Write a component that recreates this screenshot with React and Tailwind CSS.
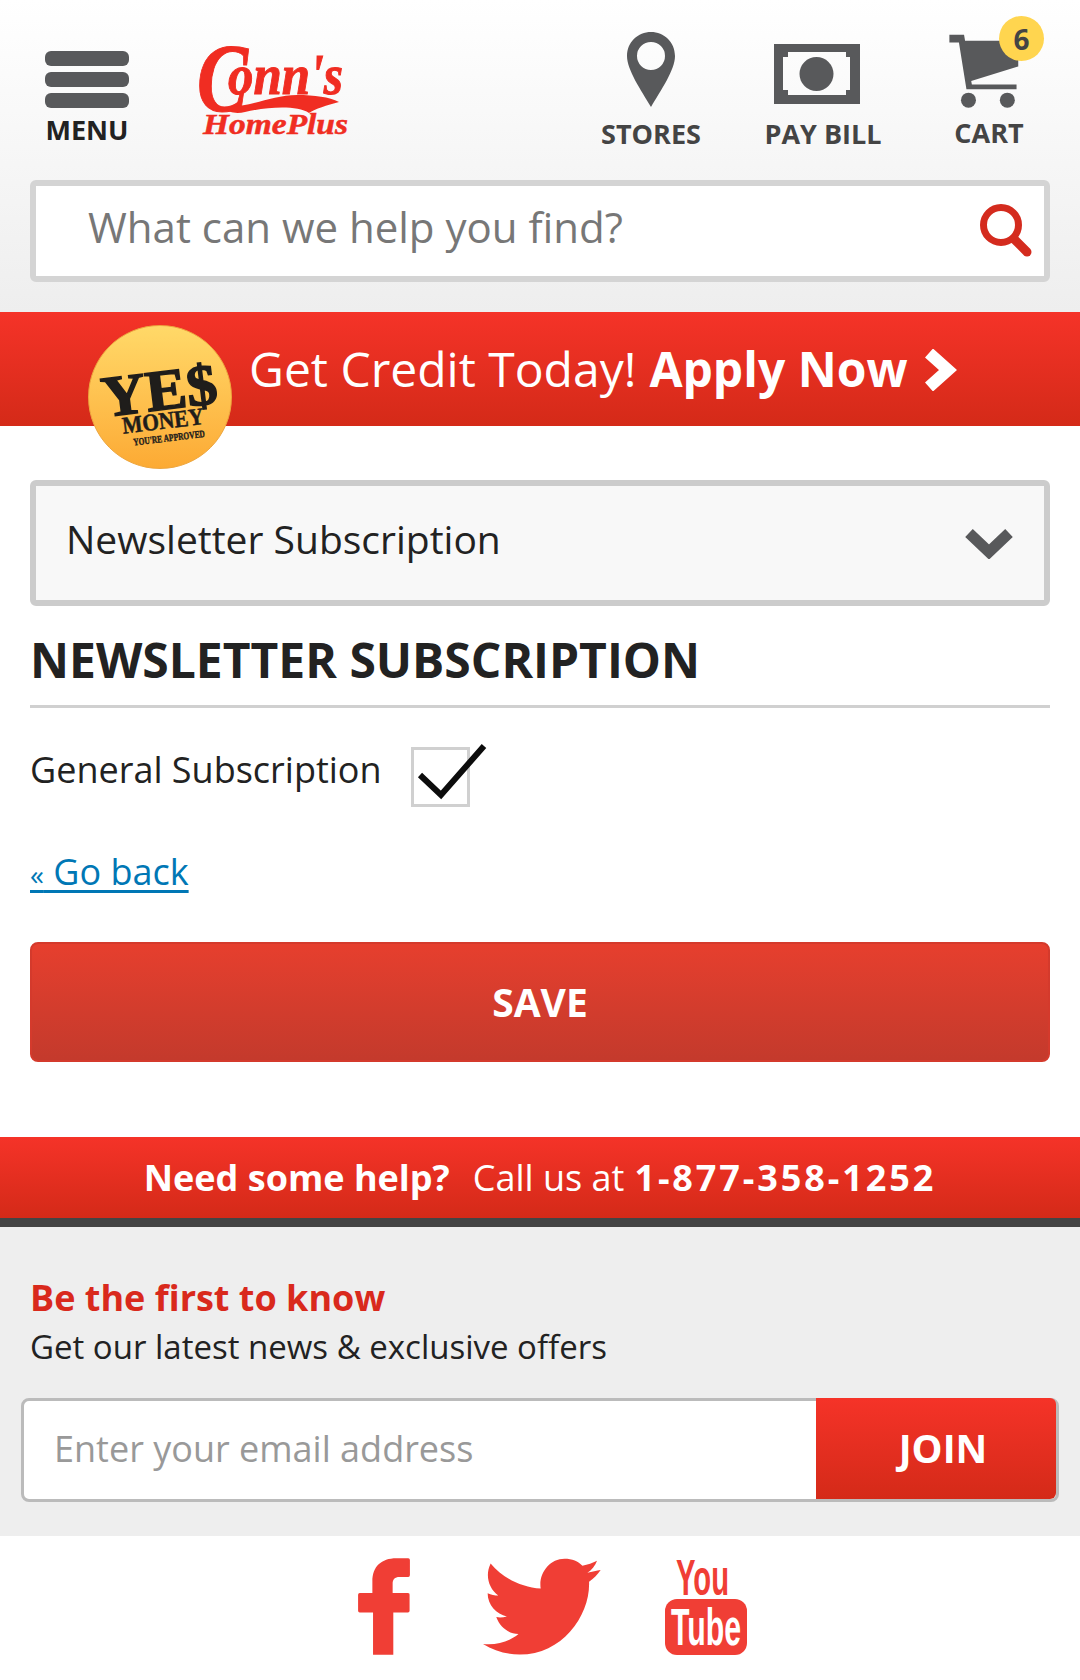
import React from "react";

const sans = { fontFamily: '"Open Sans", sans-serif' };

function MenuBars() {
  return (
    <div className="flex flex-col gap-[6px]">
      <div className="h-[15px] w-[84px] rounded-[6px] bg-[#58595b]" />
      <div className="h-[15px] w-[84px] rounded-[6px] bg-[#58595b]" />
      <div className="h-[15px] w-[84px] rounded-[6px] bg-[#58595b]" />
    </div>
  );
}

function Logo() {
  return (
    <svg width="154" height="90" viewBox="0 0 154 90" className="block overflow-visible">
      <g
        fill="#f02d22"
        stroke="#f02d22"
        strokeWidth="1"
        style={{ fontFamily: '"Liberation Serif", serif', fontWeight: 700, fontStyle: "italic" }}
      >
        <text x="0" y="64" fontSize="97" textLength="51" lengthAdjust="spacingAndGlyphs">C</text>
        <text x="31" y="47" fontSize="58" textLength="82" lengthAdjust="spacingAndGlyphs">onn</text>
        <text x="113" y="47" fontSize="58" textLength="33" lengthAdjust="spacingAndGlyphs">'s</text>
        <path stroke="none" d="M30 60 C55 60 75 48 100 48 C118 48 132 50 142 55 C130 58 118 62 112 66 C100 58 70 60 48 65 C40 67 30 66 30 60 Z" />
        <text x="6" y="87" fontSize="30" strokeWidth="0.5" textLength="145" lengthAdjust="spacingAndGlyphs">HomePlus</text>
      </g>
    </svg>
  );
}

function Pin() {
  return (
    <svg width="48" height="75" viewBox="0 0 48 75" className="block">
      <path
        fillRule="evenodd"
        fill="#58595b"
        d="M24 0 C37 0 48 10 48 24 C48 38 34 58 24 75 C14 58 0 38 0 24 C0 10 11 0 24 0 Z M24 10 A14 14 0 1 0 24 38 A14 14 0 1 0 24 10 Z"
      />
    </svg>
  );
}

function Bill() {
  return (
    <svg width="86" height="60" viewBox="0 0 86 60" className="block">
      <path
        fillRule="evenodd"
        fill="#58595b"
        d="M0 0 H86 V60 H0 Z M14 8 V13 H9 V46 H14 V51 H72 V46 H76 V13 H72 V8 Z"
      />
      <circle cx="42.500" cy="30" r="17" fill="#58595b" />
    </svg>
  );
}

function Cart() {
  return (
    <svg width="71" height="75" viewBox="1187 100 208 220" className="block">
      <path
        fill="#58595b"
        d="M1188 102 H1231 L1234 120 H1390 V195 L1252 238 L1254 248 H1385 V262 H1238 L1216 125 H1188 Z"
      />
      <circle cx="1244" cy="294" r="22" fill="#58595b" />
      <circle cx="1358" cy="294" r="22" fill="#58595b" />
    </svg>
  );
}

function SearchIcon() {
  return (
    <svg width="52" height="54" viewBox="0 0 52 54" className="block">
      <circle cx="21" cy="21" r="17.500" fill="none" stroke="#d42b1e" strokeWidth="7" />
      <path d="M34 35 L47 48" stroke="#d42b1e" strokeWidth="9" strokeLinecap="round" />
    </svg>
  );
}

function YesBadge() {
  return (
    <div className="absolute left-[88px] top-[13px] h-[144px] w-[144px] rounded-full border border-[#eda63e] bg-gradient-to-b from-[#ffd968] to-[#fcaa33]">
      <svg width="142" height="142" viewBox="0 0 142 142" className="block">
        <g
          transform="rotate(-7 71 71)"
          fill="#1f1d1b"
          stroke="#1f1d1b"
          style={{ fontFamily: '"Liberation Serif", serif', fontWeight: 700 }}
        >
          <text x="13" y="84" fontSize="58" strokeWidth="1.5" textLength="116" lengthAdjust="spacingAndGlyphs">YE$</text>
          <text x="30" y="103" fontSize="24" strokeWidth="0.5" textLength="82" lengthAdjust="spacingAndGlyphs">MONEY</text>
          <text x="39" y="116" fontSize="10" strokeWidth="0.4" textLength="72" lengthAdjust="spacingAndGlyphs">YOU'RE APPROVED</text>
        </g>
      </svg>
    </div>
  );
}

function YouTube() {
  return (
    <svg width="82" height="97" viewBox="0 0 82 97" className="block overflow-visible">
      <g style={{ fontFamily: '"Liberation Sans", sans-serif', fontWeight: 700 }}>
        <text x="11" y="37" fontSize="50" fill="#f03e35" textLength="53" lengthAdjust="spacingAndGlyphs">You</text>
        <rect x="0" y="41" width="82" height="56" rx="12" fill="#f03e35" />
        <text x="6" y="87" fontSize="52" fill="#fff" textLength="70" lengthAdjust="spacingAndGlyphs">Tube</text>
      </g>
    </svg>
  );
}

export default function App() {
  return (
    <div className="min-h-[1680px] w-[1080px] bg-white" style={sans}>
      {/* header */}
      <div className="h-[312px] bg-gradient-to-b from-white to-[#eeeeee]">
        <div className="flex h-[180px] items-start pl-[45px] pr-[57px]">
          <div className="w-[84px] pt-[51px]">
            <MenuBars />
            <div className="mt-[4px] whitespace-nowrap text-center text-[27px] leading-[36px] font-bold text-[#222]">
              MENU
            </div>
          </div>
          <div className="ml-[68px] mt-[47px]">
            <Logo />
          </div>
          <div className="ml-auto w-[100px] pt-[32px]">
            <div className="flex justify-center">
              <Pin />
            </div>
            <div className="mt-[9px] whitespace-nowrap text-center text-[27px] leading-[36px] font-bold text-[#444]">
              STORES
            </div>
          </div>
          <div className="ml-[64px] w-[116px] pt-[44px]">
            <div className="ml-[9px]">
              <Bill />
            </div>
            <div className="mt-[12px] flex justify-center whitespace-nowrap text-[27px] leading-[36px] font-bold text-[#444]">
              PAY BILL
            </div>
          </div>
          <div className="ml-[74px] w-[68px] pt-[34px]">
            <div className="relative -ml-[6px]">
              <Cart />
              <div className="absolute left-[50px] -top-[18px] flex h-[45px] w-[45px] items-center justify-center rounded-full bg-[#ffd54f] text-[28px] font-bold text-[#444]">
                6
              </div>
            </div>
            <div className="mt-[6px] flex justify-center whitespace-nowrap text-[27px] leading-[36px] font-bold text-[#444]">
              CART
            </div>
          </div>
        </div>
        <div className="mx-[30px] flex h-[102px] items-center rounded-[6px] border-[6px] border-[#d4d4d4] bg-white pl-[52px] pr-[12px]">
          <div className="flex-1 pb-[8px] text-[42px] leading-none text-[#777]">What can we help you find?</div>
          <SearchIcon />
        </div>
      </div>

      {/* credit banner */}
      <div className="relative flex h-[114px] items-center bg-gradient-to-b from-[#f53328] to-[#d42a18] pl-[249px] text-white">
        <YesBadge />
        <span className="text-[48px] leading-none">Get Credit Today!</span>
        <span className="ml-[13px] text-[48px] leading-none font-bold">Apply Now</span>
        <svg width="32" height="42" viewBox="0 0 32 42" className="ml-[17px] mt-[2px] block">
          <path d="M4 4 L23 21 L4 38" fill="none" stroke="#fff" strokeWidth="12" />
        </svg>
      </div>

      {/* account section */}
      <div className="px-[30px] pt-[54px]">
        <div className="flex h-[126px] items-center justify-between rounded-[6px] border-[6px] border-[#cccccc] bg-[#f8f8f8] pl-[30px] pr-[30px]">
          <span className="pb-[10px] text-[39px] leading-none text-[#222]">Newsletter Subscription</span>
          <svg width="50" height="32" viewBox="0 0 50 32" className="block">
            <path d="M5 6 L25 25 L45 6" fill="none" stroke="#58595b" strokeWidth="11" />
          </svg>
        </div>
        <h1 className="mt-[21px] border-b-[3px] border-[#d0d0d0] pb-[12px] text-[48px] leading-[66px] font-bold text-[#222]">
          NEWSLETTER SUBSCRIPTION
        </h1>
        <div className="mt-[39px] flex items-center">
          <span className="pb-[15px] text-[36px] leading-none text-[#222]">General Subscription</span>
          <div className="relative ml-[29px] h-[60px] w-[59px] border-[3px] border-[#d0d0d0]">
            <svg width="72" height="56" viewBox="0 0 72 56" className="absolute left-[5px] top-[-2px] overflow-visible">
              <path d="M1 27 L22 47 L65 -2" fill="none" stroke="#0c0c0c" strokeWidth="6" />
            </svg>
          </div>
        </div>
        <div className="mt-[47px]">
          <a href="#" className="text-[36px] leading-none text-[#0077b5] underline decoration-[3px] underline-offset-[5px]">
            <span className="text-[28px]">«</span> Go back
          </a>
        </div>
        <button className="mt-[51px] flex h-[120px] w-full items-center justify-center rounded-[8px] border-[2px] border-[#d43a2c] bg-gradient-to-b from-[#e63f2e] to-[#c43a2c] text-[39px] font-bold text-white">
          SAVE
        </button>
      </div>

      {/* help bar */}
      <div className="mt-[75px] flex h-[90px] items-center justify-center border-b-[9px] border-[#444444] bg-gradient-to-b from-[#f53328] to-[#d42a18] text-[36px] text-white">
        <span className="font-bold">Need some help?</span>
        <span className="ml-[23px]">Call us at</span>
        <span className="ml-[10px] font-bold tracking-[2.900px]">1-877-358-1252</span>
      </div>

      {/* signup */}
      <div className="h-[309px] bg-[#eeeeee] pt-[46px]">
        <div className="px-[30px]">
          <div className="text-[36px] leading-[50px] font-bold text-[#d9291c]">Be the first to know</div>
          <div className="text-[33px] leading-[47px] text-[#222]">Get our latest news &amp; exclusive offers</div>
        </div>
        <div className="mx-[21px] mt-[28px] flex h-[104px] rounded-[8px] border-[3px] border-[#bbbbbb] bg-white">
          <div className="flex flex-1 items-center pb-[2px] pl-[30px] text-[36px] text-[#999]">Enter your email address</div>
          <div className="-mt-[3px] flex w-[240px] items-center justify-center rounded-r-[6px] bg-gradient-to-b from-[#f53328] to-[#d42a18] pl-[14px] text-[39px] font-bold text-white">
            JOIN
          </div>
        </div>
      </div>

      {/* social */}
      <div className="flex items-start justify-center pl-[25px] pt-[22px]">
        <svg width="52" height="97" viewBox="175 84 156 292" className="block">
          <path
            fill="#f03e35"
            d="M220 375 V248 H180 Q175 248 175 243 V195 Q175 189 180 189 H218 V155 C218 110 245 85 290 85 H326 Q331 85 331 90 V135 Q331 141 326 141 H300 C285 141 279 148 279 162 V189 H325 Q331 189 330 195 V243 Q330 248 325 248 H281 V375 Z"
          />
        </svg>
        <svg width="118" height="97" viewBox="549 84 356 292" className="ml-[73px] block">
          <path
            fill="#f03e35"
            d="M572 100 C610 145 665 172 723 176 C716 130 750 86 795 86 C818 86 836 94 849 107 C865 104 880 99 893 92 C888 107 877 120 864 128 C878 126 892 122 904 120 C895 134 882 146 869 155 C873 255 790 375 660 375 C620 375 582 363 549 343 C590 347 627 337 656 313 C625 312 600 292 589 262 C600 264 610 263 621 260 C590 254 563 225 563 190 C573 195 585 197 595 197 C565 175 555 135 572 100 Z"
          />
        </svg>
        <div className="ml-[64px]">
          <YouTube />
        </div>
      </div>
    </div>
  );
}
